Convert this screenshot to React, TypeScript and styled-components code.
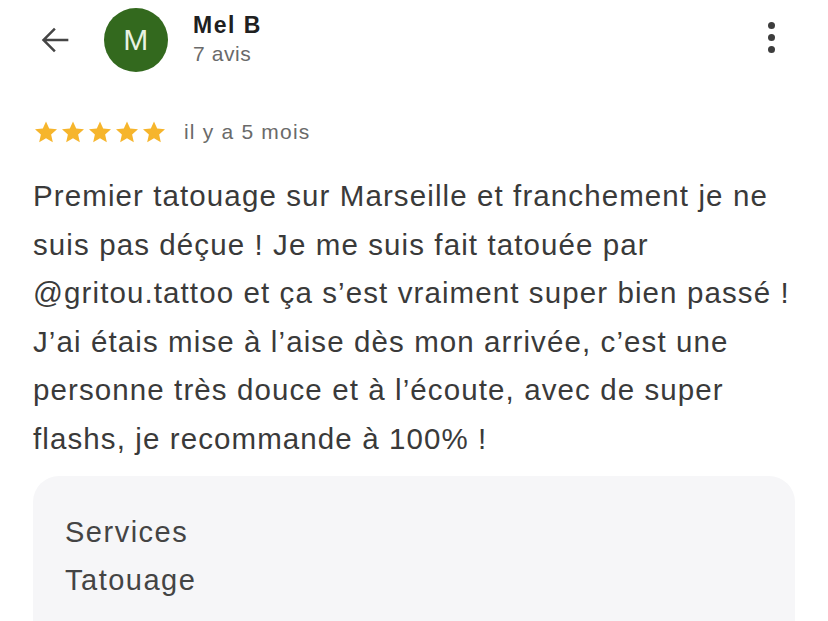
import * as React from "react";
import styled, { createGlobalStyle } from "styled-components";

const GlobalStyle = createGlobalStyle`
  html, body {
    margin: 0;
    padding: 0;
    background: #ffffff;
    font-family: "Liberation Sans", Arial, Helvetica, sans-serif;
  }
`;

const Page = styled.div`
  width: 828px;
  height: 621px;
  overflow: hidden;
  padding: 0 33px;
  box-sizing: border-box;
`;

const Header = styled.div`
  display: flex;
  align-items: center;
  height: 80px;
`;

const BackButton = styled.div`
  width: 40px;
  display: flex;
  align-items: center;
  margin-left: 2px;
  color: #454545;
`;

const Avatar = styled.div`
  width: 64px;
  height: 64px;
  border-radius: 50%;
  background: #33691e;
  color: #e9f2e2;
  display: flex;
  align-items: center;
  justify-content: center;
  font-size: 30px;
  letter-spacing: 0.5px;
  margin-left: 29px;
`;

const Author = styled.div`
  flex: 1;
  margin-left: 25px;
  align-self: flex-start;
  padding-top: 11px;
`;

const AuthorName = styled.div`
  font-weight: 700;
  font-size: 23px;
  letter-spacing: 1.5px;
  color: #202020;
  line-height: 28px;
`;

const AuthorMeta = styled.div`
  font-size: 21px;
  letter-spacing: 0.6px;
  color: #6a6a6a;
  line-height: 30px;
`;

const MenuButton = styled.div`
  display: flex;
  flex-direction: column;
  gap: 5px;
  margin-right: 20px;
  align-self: flex-start;
  margin-top: 22px;
`;

const Dot = styled.span`
  width: 7px;
  height: 7px;
  border-radius: 50%;
  background: #3d3d3d;
`;

const RatingRow = styled.div`
  display: flex;
  align-items: center;
  margin-top: 38px;
  height: 28px;
`;

const Stars = styled.div`
  display: flex;
  gap: 1px;
`;

const When = styled.span`
  font-size: 21px;
  letter-spacing: 1.2px;
  color: #6a6a6a;
  margin-left: 17px;
`;

const Body = styled.p`
  margin: 26px 0 0;
  font-size: 29.5px;
  letter-spacing: 1.1px;
  line-height: 48.5px;
  color: #3a3a3a;
  white-space: nowrap;
`;

const ServicesCard = styled.div`
  margin-top: 13px;
  background: #f6f6f8;
  border-radius: 26px;
  padding: 32px 32px 40px;
  height: 200px;
  box-sizing: border-box;
`;

const CardLine = styled.div`
  font-size: 29px;
  letter-spacing: 1.5px;
  color: #444444;
  line-height: 48px;
`;

const Star = () => (
  <svg width="26" height="26" viewBox="0 0 24 24">
    <path
      d="M12 2.2l2.95 6.6 7.2.72-5.42 4.8 1.56 7.08L12 17.75 5.71 21.4l1.56-7.08L1.85 9.52l7.2-.72z"
      fill="#f6b52c"
    />
  </svg>
);

const ArrowBack = () => (
  <svg width="40" height="40" viewBox="0 0 24 24">
    <path
      d="M20 11.25H6.9l5.55-5.55L11.4 4.65 4.05 12l7.35 7.35 1.05-1.05-5.55-5.55H20z"
      fill="currentColor"
    />
  </svg>
);

const lines = [
  "Premier tatouage sur Marseille et franchement je ne",
  "suis pas déçue ! Je me suis fait tatouée par",
  "@gritou.tattoo et ça s’est vraiment super bien passé !",
  "J’ai étais mise à l’aise dès mon arrivée, c’est une",
  "personne très douce et à l’écoute, avec de super",
  "flashs, je recommande à 100% !"
];

export default function App() {
  return (
    <Page>
      <GlobalStyle />
      <Header>
        <BackButton>
          <ArrowBack />
        </BackButton>
        <Avatar>M</Avatar>
        <Author>
          <AuthorName>Mel B</AuthorName>
          <AuthorMeta>7 avis</AuthorMeta>
        </Author>
        <MenuButton>
          <Dot />
          <Dot />
          <Dot />
        </MenuButton>
      </Header>
      <RatingRow>
        <Stars>
          {[0, 1, 2, 3, 4].map(i => (
            <Star key={i} />
          ))}
        </Stars>
        <When>il y a 5 mois</When>
      </RatingRow>
      <Body>
        {lines.map((line, idx) => (
          <React.Fragment key={idx}>
            {line}
            {idx < lines.length - 1 && <br />}
          </React.Fragment>
        ))}
      </Body>
      <ServicesCard>
        <CardLine>Services</CardLine>
        <CardLine>Tatouage</CardLine>
      </ServicesCard>
    </Page>
  );
}
